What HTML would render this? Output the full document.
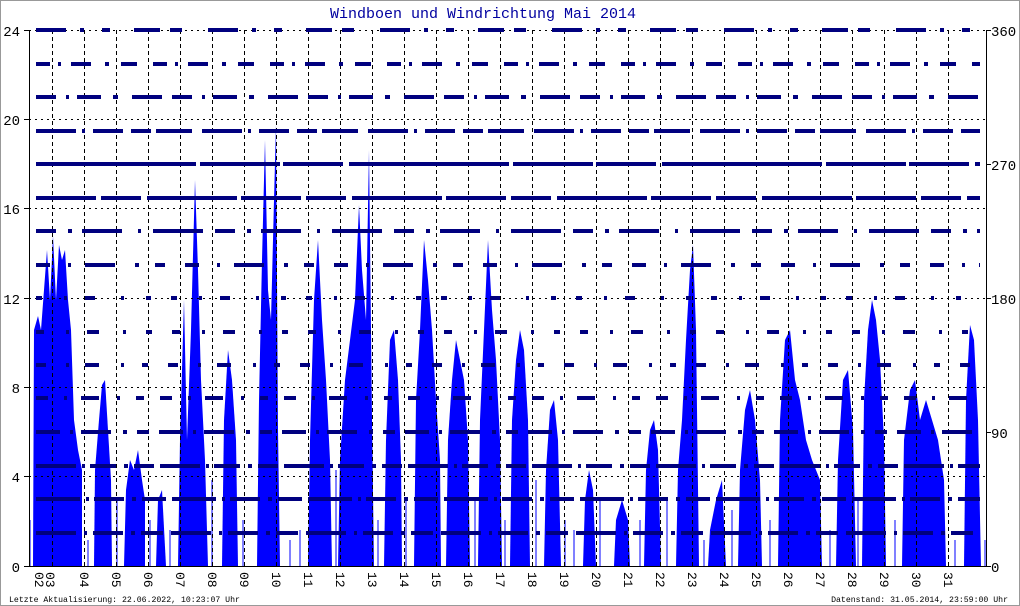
<!DOCTYPE html>
<html><head><meta charset="utf-8"><style>
html,body{margin:0;padding:0;background:#fff;}
svg{display:block;}
text{font-family:"Liberation Mono",monospace;}
</style></head><body>
<svg width="1020" height="606" viewBox="0 0 1020 606" xmlns="http://www.w3.org/2000/svg">
<rect x="0.5" y="0.5" width="1019" height="605" fill="#fff" stroke="#999"/>
<text x="483" y="18" font-size="15" fill="#0000a0" text-anchor="middle">Windboen und Windrichtung Mai 2014</text>

<g fill="#0000ff">
<path d="M33,566 L34,330 L38,316 L41,330 L44,290 L47,250 L50,300 L53,236 L56,300 L59,245 L62,260 L65,250 L68,300 L71,330 L74,420 L78,450 L82,470 L82,566 Z"/>
<path d="M94,566 L95,470 L99,420 L102,385 L105,380 L108,430 L111,480 L112,566 Z"/>
<path d="M124,566 L126,490 L130,460 L134,470 L138,450 L142,480 L145,500 L145,566 Z"/>
<path d="M156,566 L158,500 L162,490 L166,566 Z"/>
<path d="M178,566 L180,440 L184,300 L187,440 L191,330 L195,180 L198,270 L201,380 L205,460 L208,566 Z"/>
<path d="M222,566 L224,420 L228,350 L232,380 L236,440 L238,566 Z"/>
<path d="M257,566 L259,400 L262,260 L265,140 L268,290 L271,320 L274,200 L276,125 L278,430 L280,566 Z"/>
<path d="M308,566 L310,440 L314,300 L318,240 L322,320 L326,380 L330,460 L332,566 Z"/>
<path d="M338,566 L340,460 L345,380 L350,340 L355,300 L359,205 L362,270 L366,320 L369,150 L372,420 L374,566 Z"/>
<path d="M384,566 L386,440 L390,340 L394,330 L398,380 L401,460 L402,566 Z"/>
<path d="M414,566 L416,400 L420,330 L424,240 L428,280 L432,330 L436,400 L440,460 L441,566 Z"/>
<path d="M446,566 L448,440 L452,380 L456,340 L460,360 L464,380 L468,440 L470,566 Z"/>
<path d="M478,566 L480,420 L484,330 L488,240 L492,310 L496,360 L500,440 L502,566 Z"/>
<path d="M510,566 L512,420 L516,360 L520,330 L524,350 L528,420 L530,566 Z"/>
<path d="M544,566 L546,470 L550,410 L554,400 L558,440 L561,566 Z"/>
<path d="M583,566 L585,500 L589,470 L593,490 L596,566 Z"/>
<path d="M614,566 L616,520 L622,500 L628,520 L630,566 Z"/>
<path d="M644,566 L646,470 L650,430 L654,420 L658,450 L661,566 Z"/>
<path d="M676,566 L678,470 L682,420 L686,340 L690,270 L693,245 L696,330 L699,566 Z"/>
<path d="M708,566 L710,530 L716,500 L722,480 L726,566 Z"/>
<path d="M738,566 L740,470 L745,410 L750,390 L755,420 L760,480 L762,566 Z"/>
<path d="M778,566 L780,420 L785,340 L790,330 L795,380 L800,400 L806,440 L812,460 L820,480 L822,566 Z"/>
<path d="M836,566 L838,460 L843,380 L848,370 L853,430 L856,566 Z"/>
<path d="M862,566 L864,400 L868,330 L872,300 L876,320 L880,360 L884,440 L886,566 Z"/>
<path d="M902,566 L904,440 L910,390 L915,380 L920,420 L926,400 L932,420 L938,440 L944,480 L946,566 Z"/>
<path d="M964,566 L966,400 L970,325 L974,340 L978,420 L981,566 Z"/>
</g>
<g stroke="#0000ff" stroke-width="1">
<path d="M30,566V520 M88,566V540 M117,566V500 M150,566V520 M170,566V530 M212,566V480 M243,566V520 M290,566V540 M300,566V530 M336,566V470 M378,566V520 M406,566V500 M475,566V500 M505,566V520 M536,566V480 M565,566V520 M574,566V530 M600,566V500 M640,566V520 M667,566V500 M704,566V540 M732,566V510 M770,566V520 M830,566V530 M858,566V500 M895,566V520 M955,566V540 M985,566V540"/>
</g>

<g stroke="#000" stroke-width="1" fill="none">
<path stroke-dasharray="2,4" d="M29,30.5H986 M29,119.5H986 M29,208.5H986 M29,298.5H986 M29,387.5H986 M29,476.5H986"/>
<path stroke-dasharray="4,3" d="M52.5,30V566 M84.5,30V566 M116.5,30V566 M148.5,30V566 M180.5,30V566 M212.5,30V566 M244.5,30V566 M276.5,30V566 M308.5,30V566 M340.5,30V566 M372.5,30V566 M404.5,30V566 M436.5,30V566 M468.5,30V566 M500.5,30V566 M532.5,30V566 M564.5,30V566 M596.5,30V566 M628.5,30V566 M660.5,30V566 M692.5,30V566 M724.5,30V566 M756.5,30V566 M788.5,30V566 M820.5,30V566 M852.5,30V566 M884.5,30V566 M916.5,30V566 M948.5,30V566"/>
</g>

<g stroke="#00007f" stroke-width="4" fill="none">
<path d="M36,30H980" stroke-dasharray="30,14,4,18,8,24,26,10,12,26"/>
<path d="M36,64H980" stroke-dasharray="14,8,3,10,20,14,4,12,16,16"/>
<path d="M36,97H980" stroke-dasharray="20,10,3,8,24,12,5,14,30,10"/>
<path d="M36,131H980" stroke-dasharray="40,6,3,8,30,8,20,5,36,10"/>
<path d="M36,164H980" stroke-dasharray="160,4,80,3,60,6"/>
<path d="M36,198H980" stroke-dasharray="60,5,40,6,90,4"/>
<path d="M36,231H980" stroke-dasharray="20,12,4,10,40,16,3,12,50,12"/>
<path d="M36,265H980" stroke-dasharray="14,18,3,14,30,20,4,16,10,20"/>
<path d="M36,298H980" stroke-dasharray="6,22,3,18,10,26,3,22,5,20"/>
<path d="M36,332H980" stroke-dasharray="8,22,3,18,12,24,3,20,6,20"/>
<path d="M36,365H980" stroke-dasharray="10,20,3,16,14,22,3,18,6,20"/>
<path d="M36,398H980" stroke-dasharray="12,16,3,14,18,18,3,16,8,16"/>
<path d="M36,432H980" stroke-dasharray="24,10,3,8,30,12,4,10,12,10"/>
<path d="M36,466H980" stroke-dasharray="40,6,3,5,26,8,4,6,20,6"/>
<path d="M36,499H980" stroke-dasharray="44,6,3,5,30,8,4,6,24,6"/>
<path d="M36,533H980" stroke-dasharray="40,8,3,6,30,8,4,6,22,8"/>
</g>

<g stroke="#000" stroke-width="1" fill="none">
<path d="M29.5,30V566.5H986.5V30"/>
<path d="M24,30.5H29 M24,119.5H29 M24,208.5H29 M24,298.5H29 M24,387.5H29 M24,476.5H29 M24,566.5H29"/>
<path d="M986,30.5H991 M986,164.5H991 M986,298.5H991 M986,432.5H991 M986,566.5H991"/>
</g>
<g font-family="Liberation Sans, sans-serif" font-size="14" fill="#000">
<text x="20" y="36" text-anchor="end">24</text>
<text x="20" y="125" text-anchor="end">20</text>
<text x="20" y="214" text-anchor="end">16</text>
<text x="20" y="304" text-anchor="end">12</text>
<text x="20" y="393" text-anchor="end">8</text>
<text x="20" y="482" text-anchor="end">4</text>
<text x="20" y="572" text-anchor="end">0</text>
<text x="991" y="36">360</text>
<text x="991" y="170">270</text>
<text x="991" y="304">180</text>
<text x="991" y="438">90</text>
<text x="991" y="572">0</text>
</g>
<g font-family="Liberation Sans, sans-serif" font-size="13" fill="#000">
<text transform="translate(35,572) rotate(90)">02</text>
<text transform="translate(46,572) rotate(90)">03</text>
<text transform="translate(80,572) rotate(90)">04</text>
<text transform="translate(112,572) rotate(90)">05</text>
<text transform="translate(144,572) rotate(90)">06</text>
<text transform="translate(176,572) rotate(90)">07</text>
<text transform="translate(208,572) rotate(90)">08</text>
<text transform="translate(240,572) rotate(90)">09</text>
<text transform="translate(272,572) rotate(90)">10</text>
<text transform="translate(304,572) rotate(90)">11</text>
<text transform="translate(336,572) rotate(90)">12</text>
<text transform="translate(368,572) rotate(90)">13</text>
<text transform="translate(400,572) rotate(90)">14</text>
<text transform="translate(432,572) rotate(90)">15</text>
<text transform="translate(464,572) rotate(90)">16</text>
<text transform="translate(496,572) rotate(90)">17</text>
<text transform="translate(528,572) rotate(90)">18</text>
<text transform="translate(560,572) rotate(90)">19</text>
<text transform="translate(592,572) rotate(90)">20</text>
<text transform="translate(624,572) rotate(90)">21</text>
<text transform="translate(656,572) rotate(90)">22</text>
<text transform="translate(688,572) rotate(90)">23</text>
<text transform="translate(720,572) rotate(90)">24</text>
<text transform="translate(752,572) rotate(90)">25</text>
<text transform="translate(784,572) rotate(90)">26</text>
<text transform="translate(816,572) rotate(90)">27</text>
<text transform="translate(848,572) rotate(90)">28</text>
<text transform="translate(880,572) rotate(90)">29</text>
<text transform="translate(912,572) rotate(90)">30</text>
<text transform="translate(944,572) rotate(90)">31</text>
</g>
<text x="9" y="602" font-size="8.2" fill="#000">Letzte Aktualisierung: 22.06.2022, 10:23:07 Uhr</text>
<text x="1008" y="602" font-size="8.2" fill="#000" text-anchor="end">Datenstand: 31.05.2014, 23:59:00 Uhr</text>
</svg>
</body></html>
